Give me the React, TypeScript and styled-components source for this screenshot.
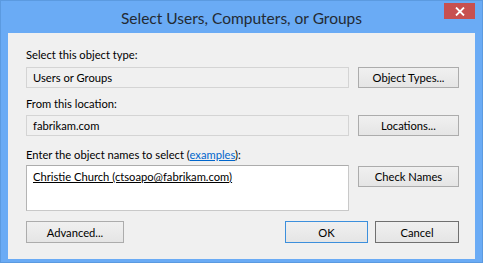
import { createGlobalStyle, styled } from 'styled-components';

const GlobalStyle = createGlobalStyle`
  html, body {
    margin: 0;
    padding: 0;
    background: #ffffff;
  }
  body {
    font-family: Lato, "Noto Sans", sans-serif;
  }
`;

const Window = styled.div`
  width: 483px;
  height: 263px;
  box-sizing: border-box;
  background: #6aabf5;
  border: 1px solid #5b9ae0;
  display: flex;
  flex-direction: column;
  padding: 0 7px 3px 7px;
`;

const TitleBar = styled.div`
  position: relative;
  height: 31px;
  flex: none;
  display: flex;
  align-items: center;
  justify-content: center;
  font-size: 15.5px;
  color: #232a33;
  padding-top: 1px;
`;

const CloseButton = styled.div`
  position: absolute;
  top: 2px;
  right: 0;
  width: 31px;
  height: 16px;
  background: #c75050;
  display: flex;
  align-items: center;
  justify-content: center;
`;

const Panel = styled.div`
  flex: 1;
  background: #f0f0f0;
  padding: 14px 16px 0 18px;
  font-size: 11.2px;
  color: #000;
`;

const Label = styled.div<{ $gap: number }>`
  height: 16px;
  line-height: 16px;
  margin-bottom: ${(p) => p.$gap}px;
`;

const Row = styled.div<{ $mb: number }>`
  display: flex;
  align-items: flex-start;
  gap: 9px;
  margin-bottom: ${(p) => p.$mb}px;
`;

const ReadOnlyField = styled.div`
  flex: 1;
  height: 21px;
  box-sizing: border-box;
  border: 1px solid #d4d4d4;
  background: #f0f0f0;
  padding-left: 6px;
  line-height: 19px;
`;

const NamesBox = styled.div`
  flex: 1;
  height: 46px;
  box-sizing: border-box;
  border: 1px solid #c9c9c9;
  border-top-color: #acacac;
  border-left-color: #b4b4b4;
  background: #ffffff;
  padding: 3px 6px 0;
  line-height: 16px;
  text-decoration: underline;
`;

const Button = styled.div<{
  $width: number;
  $height?: number;
  $offset?: number;
  $variant?: 'default' | 'focus';
}>`
  width: ${(p) => p.$width}px;
  height: ${(p) => p.$height ?? 21}px;
  margin-top: ${(p) => p.$offset ?? 0}px;
  box-sizing: border-box;
  flex: none;
  border: 1px solid
    ${(p) =>
      p.$variant === 'default' ? '#3c8fdc' : p.$variant === 'focus' ? '#707070' : '#acacac'};
  background: linear-gradient(#f0f0f0, #e5e5e5);
  display: flex;
  align-items: center;
  justify-content: center;
`;

const Link = styled.span`
  color: #0066cc;
  text-decoration: underline;
`;

const ButtonRow = styled.div`
  display: flex;
  margin-top: 10px;
`;

const Spacer = styled.div`
  flex: 1;
`;

const OkCancel = styled.div`
  display: flex;
  gap: 7px;
`;

export default function App() {
  return (
    <>
      <GlobalStyle />
      <Window>
        <TitleBar>
          Select Users, Computers, or Groups
          <CloseButton>
            <svg width="10" height="9" viewBox="0 0 10 9">
              <path d="M1 0.5 L9 8.5 M9 0.5 L1 8.5" stroke="#fff" strokeWidth="1.8" />
            </svg>
          </CloseButton>
        </TitleBar>
        <Panel>
          <Label $gap={4}>Select this object type:</Label>
          <Row $mb={8}>
            <ReadOnlyField>Users or Groups</ReadOnlyField>
            <Button $width={101}>Object Types...</Button>
          </Row>
          <Label $gap={3}>From this location:</Label>
          <Row $mb={11}>
            <ReadOnlyField>fabrikam.com</ReadOnlyField>
            <Button $width={101}>Locations...</Button>
          </Row>
          <Label $gap={2}>
            Enter the object names to select (<Link>examples</Link>):
          </Label>
          <Row $mb={0}>
            <NamesBox>Christie Church (ctsoapo@fabrikam.com)</NamesBox>
            <Button $width={101} $offset={1}>
              Check Names
            </Button>
          </Row>
          <ButtonRow>
            <Button $width={98} $height={22}>
              Advanced...
            </Button>
            <Spacer />
            <OkCancel>
              <Button $width={83} $height={22} $variant="default">
                OK
              </Button>
              <Button $width={84} $height={22} $variant="focus">
                Cancel
              </Button>
            </OkCancel>
          </ButtonRow>
        </Panel>
      </Window>
    </>
  );
}
